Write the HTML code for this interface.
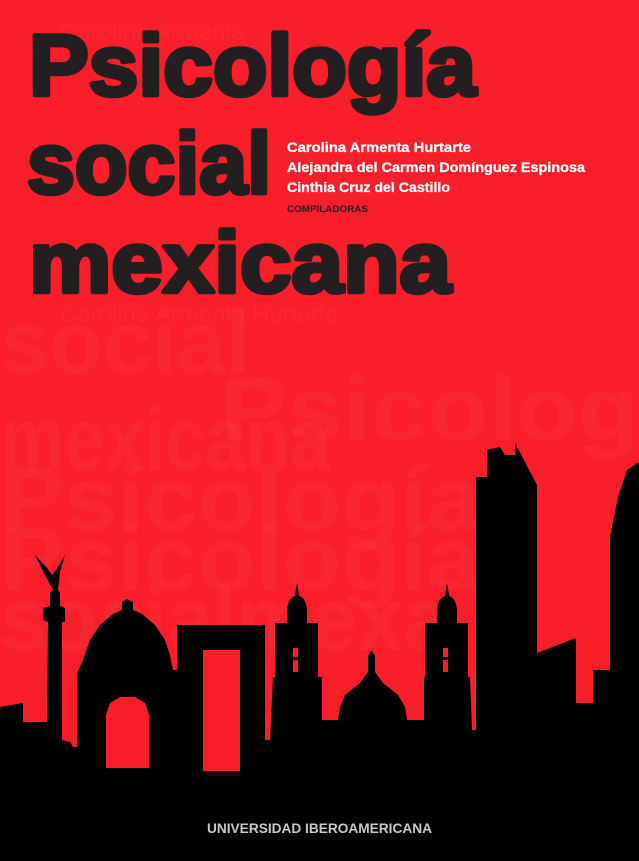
<!DOCTYPE html>
<html><head><meta charset="utf-8"><style>
html,body{margin:0;padding:0;background:#f81f2a;}
svg{display:block}
</style></head><body>
<svg width="639" height="861" viewBox="0 0 639 861" xmlns="http://www.w3.org/2000/svg">
<rect width="639" height="861" fill="#f81f2a"/>
<g fill="#ffffff" fill-opacity="0.03" font-family="Liberation Sans, sans-serif" font-weight="bold">
<text x="0" y="373" font-size="90" textLength="250" lengthAdjust="spacingAndGlyphs">social</text>
<text x="220" y="440" font-size="90" textLength="419" lengthAdjust="spacingAndGlyphs">Psicolog</text>
<text x="0" y="470" font-size="90" textLength="330" lengthAdjust="spacingAndGlyphs">mexicana</text>
<text x="0" y="530" font-size="90" textLength="480" lengthAdjust="spacingAndGlyphs">Psicología</text>
<text x="0" y="590" font-size="90" textLength="480" lengthAdjust="spacingAndGlyphs">Psicología</text>
<text x="0" y="650" font-size="90" textLength="450" lengthAdjust="spacingAndGlyphs">socialmexa</text>
<text x="60" y="40" font-size="24" font-weight="normal">Carolina Armenta</text>
<text x="60" y="322" font-size="24" font-weight="normal">Carolina Armenta Hurtarte</text>
</g>
<g fill="#231f20" stroke="#231f20" stroke-width="4.5" stroke-linejoin="round" font-family="Liberation Sans, sans-serif" font-weight="bold">
<text x="29" y="95" font-size="86" textLength="447" lengthAdjust="spacingAndGlyphs">Psicología</text>
<text x="27" y="193" font-size="86" textLength="244" lengthAdjust="spacingAndGlyphs">social</text>
<text x="29" y="292" font-size="86" textLength="422" lengthAdjust="spacingAndGlyphs">mexicana</text>
</g>
<g fill="#ffffff" stroke="#ffffff" stroke-width="0.3" font-family="Liberation Sans, sans-serif" font-weight="bold" font-size="14">
<text x="287" y="152" textLength="184" lengthAdjust="spacingAndGlyphs">Carolina Armenta Hurtarte</text>
<text x="287" y="172" textLength="298" lengthAdjust="spacingAndGlyphs">Alejandra del Carmen Domínguez Espinosa</text>
<text x="287" y="192" textLength="163" lengthAdjust="spacingAndGlyphs">Cinthia Cruz del Castillo</text>
</g>
<text x="287" y="212" fill="#231f20" font-family="Liberation Sans, sans-serif" font-weight="bold" font-size="9.5" textLength="81" lengthAdjust="spacingAndGlyphs">COMPILADORAS</text>
<path fill="#000" fill-rule="evenodd" d="
M0,707 L23,703 L23,722 L47,722 L47,740 L48,622 L43,620 L43,608 L50,606 L50,593 L53,590
L45,575 L35,555 L47,568 L52,575 L56,570 L65,555 L60,572 L58,590 L60,593 L60,606 L65,608 L65,622 L62,622 L62,740 L70,742 L73,747 L77,747
L77,673 L83,660 L90,640 L100,625 L113,614 L122,610 L122,602 L127,599 L133,602 L133,610 L142,614 L155,625 L165,640 L170,655 L173,670 L177,670
L177,625 L265,625 L265,740 L270,740 L273,677 L275,677 L275,623 L287,623 L287,610 Q288,598 295,596 L296,588 L297,584 L298,588 L299,596 Q306,598 307,610 L307,623 L318,623 L318,677 L322,677 L322,720
L338,720 L340,707 L345,695 L360,683 L368,672 L368,656 L371,650 L375,656 L375,672 L383,683 L398,695 L405,707 L407,720
L424,720 L424,677 L425,677 L425,623 L437,623 L437,610 Q438,598 445,596 L446,588 L447,584 L448,588 L449,596 Q456,598 457,610 L457,623 L468,623 L468,677 L470,677 L472,730 L476,730
L476,477 L487,477 L487,450 L500,447 L505,455 L515,455 L515,443 L537,485 L537,653 L576,638 L576,703 L593,703 L593,670 L610,670 L610,537 L618,497 L627,470 L639,462
L639,861 L0,861 Z
M106,768 L106,715 L110,703 L120,697 L135,697 L145,703 L149,715 L149,768 Z
M203,650 L240,650 L240,771 L203,771 Z
M293,648 L298,648 L298,657 L293,657 Z M293,660 L298,660 L298,672 L293,672 Z
M443,648 L448,648 L448,657 L443,657 Z M443,660 L448,660 L448,672 L443,672 Z"/>
<text x="319.5" y="833" fill="#c8c8c8" text-anchor="middle" font-family="Liberation Sans, sans-serif" font-weight="bold" font-size="13.5" textLength="225" lengthAdjust="spacingAndGlyphs">UNIVERSIDAD IBEROAMERICANA</text>
</svg>
</body></html>
